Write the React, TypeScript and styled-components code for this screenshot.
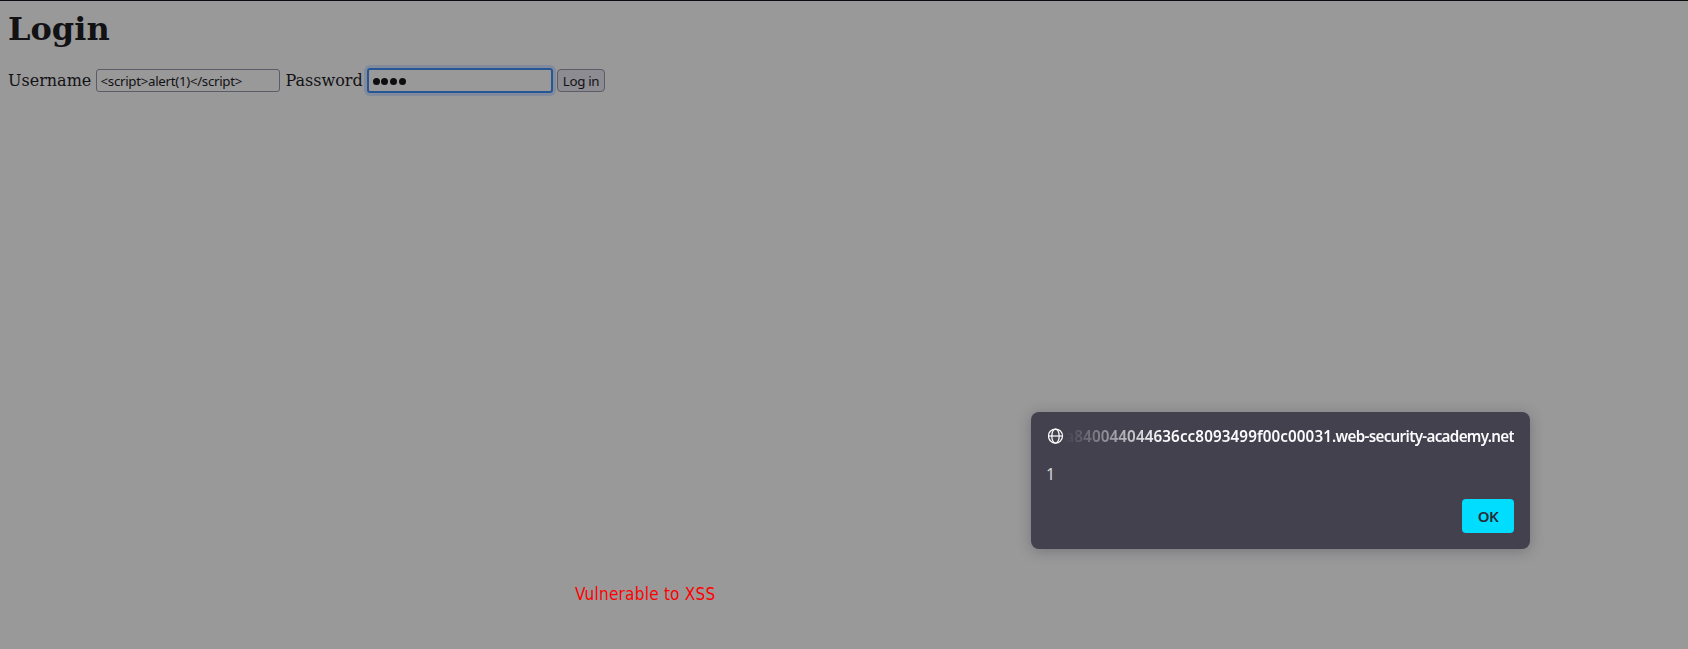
import React from 'react';
import styled, { createGlobalStyle } from 'styled-components';

const GlobalStyle = createGlobalStyle`
  * { box-sizing: border-box; }
  html { background: #99999a; }
  body { margin: 0; font-family: "DejaVu Serif", serif; color: #121214; }
`;

const Page = styled.main`
  position: relative;
  height: 649px;
  overflow: hidden;
  background: #99999a;
  border-top: 1px solid #0c0b12;
  padding: 10px 8px 0;
`;

const Title = styled.h1`
  margin: 0;
  height: 37px;
  font-size: 32px;
  line-height: 37px;
  font-weight: 700;
`;

const Form = styled.form`
  display: flex;
  align-items: center;
  height: 27px;
  margin-top: 19px;
`;

const Label = styled.label<{ $width: number }>`
  width: ${(p) => p.$width}px;
  flex: none;
  font-size: 16px;
  line-height: 19px;
  white-space: nowrap;
`;

const Field = styled.input`
  flex: none;
  width: 184px;
  height: 23px;
  margin: 0 5.5px 0 0;
  padding: 1px 0 0 3.5px;
  border: 1px solid #5c5b68;
  border-radius: 3px;
  outline: none;
  background: transparent;
  color: #121214;
  font: 13.33px "Noto Sans", sans-serif;
  letter-spacing: -0.31px;
`;

const PasswordField = styled.div`
  flex: none;
  display: flex;
  align-items: center;
  gap: 1.7px;
  width: 186px;
  height: 25px;
  margin-right: 4px;
  padding: 1px 3.7px 0;
  border: 2px solid #265695;
  border-radius: 3px;
  box-shadow: 0 0 0 3px #818b9b;
`;

const Dot = styled.span`
  width: 7px;
  height: 7px;
  border-radius: 50%;
  background: #0e0e10;
`;

const Submit = styled.button`
  width: 48px;
  height: 23px;
  padding: 1px 0 0;
  border: 1px solid #5c5b68;
  border-radius: 4px;
  background: #8d8c92;
  color: #121214;
  font: 13.33px "Noto Sans", sans-serif;
  letter-spacing: -0.31px;
  white-space: nowrap;
`;

const Dialog = styled.section`
  position: absolute;
  left: 1031px;
  top: 411px;
  width: 499px;
  height: 137px;
  padding: 15px 16px 16px;
  border-radius: 8px;
  background: #42414d;
  box-shadow: 0 2px 14px rgba(30, 30, 40, 0.28);
  color: #fbfbfe;
  font-family: "Noto Sans", sans-serif;
  font-size: 16px;
  display: flex;
  flex-direction: column;
`;

const Origin = styled.header`
  display: flex;
  align-items: center;
  height: 18px;
  svg { flex: none; margin-left: 1px; }
`;

const Host = styled.div`
  flex: 1;
  min-width: 0;
  display: flex;
  justify-content: flex-end;
  height: 24px;
  margin-left: 1px;
  line-height: 25px;
  font-size: 15.2px;
  font-weight: 600;
  white-space: nowrap;
  mask-image: linear-gradient(to right, transparent, #000 96px);
`;

const Subdomain = styled.span`
  letter-spacing: 0.11px;
`;

const Domain = styled.span`
  letter-spacing: -0.68px;
`;

const Message = styled.p`
  margin: 18px 0 0;
  height: 22px;
  line-height: 22px;
  color: #d6d6da;
  text-indent: -1px;
`;

const Actions = styled.footer`
  display: flex;
  justify-content: flex-end;
  margin-top: auto;
`;

const Accept = styled.button`
  width: 52px;
  height: 34px;
  padding: 0 0 1px;
  border: 0;
  border-radius: 4px;
  background: #00ddff;
  color: #2b2a33;
  font: 600 15px "Noto Sans", sans-serif;
  letter-spacing: -0.4px;
`;

const Note = styled.p`
  position: absolute;
  left: 575px;
  top: 583px;
  margin: 0;
  color: #ff0000;
  font: 17px/20px "DejaVu Sans Condensed", "DejaVu Sans", sans-serif;
  letter-spacing: 0.24px;
  white-space: nowrap;
`;

const Globe = () => (
  <svg width="16" height="16" viewBox="0 0 16 16" fill="none" stroke="#fbfbfe" strokeWidth="1.25">
    <circle cx="7.5" cy="8" r="7" />
    <ellipse cx="7.5" cy="8" rx="3.7" ry="7" />
    <path d="M.5 8h14" />
  </svg>
);

export default function App() {
  return (
    <>
      <GlobalStyle />
      <Page>
        <Title>Login</Title>
        <Form onSubmit={(e) => e.preventDefault()}>
          <Label $width={88}>Username</Label>
          <Field readOnly value="<script>alert(1)</script>" />
          <Label $width={81.5}>Password</Label>
          <PasswordField>
            {[0, 1, 2, 3].map((i) => (
              <Dot key={i} />
            ))}
          </PasswordField>
          <Submit>Log in</Submit>
        </Form>
        <Dialog role="dialog">
          <Origin>
            <Globe />
            <Host>
              <Subdomain>a840044044636cc8093499f00c00031</Subdomain>
              <Domain>.web-security-academy.net</Domain>
            </Host>
          </Origin>
          <Message>1</Message>
          <Actions>
            <Accept>OK</Accept>
          </Actions>
        </Dialog>
        <Note>Vulnerable to XSS</Note>
      </Page>
    </>
  );
}
